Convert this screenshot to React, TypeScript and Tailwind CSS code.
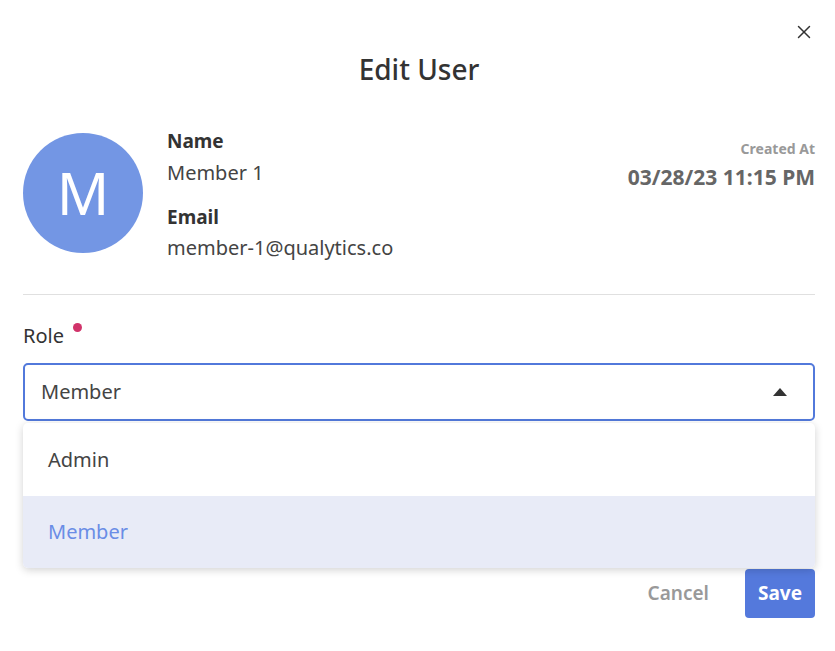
import { X } from 'lucide-react';

const FONT = { fontFamily: '"Noto Sans", "Open Sans", sans-serif' };

export default function App() {
  return (
    <div className="relative w-[835px] h-[651px] bg-white text-[#333]" style={FONT}>
      <button className="absolute right-[20px] top-[21px] text-[#333]">
        <X size={22} strokeWidth={1.6} />
      </button>

      <div className="px-[23px] pr-[20px]">
        <h1 className="pt-[49px] text-center text-[28px] leading-[40px] font-medium text-[#333]">Edit User</h1>

        {/* profile */}
        <div className="mt-[23px] flex items-start">
          <div className="mt-[21px] w-[120px] h-[120px] rounded-full bg-[#7396e4] flex items-center justify-center shrink-0">
            <span className="text-white text-[58px] leading-none font-normal">M</span>
          </div>
          <div className="ml-[24px] mt-[15px] flex-1">
            <div className="text-[19px] leading-[28px] font-bold text-[#333]">Name</div>
            <div className="mt-[4px] text-[20px] leading-[28px] text-[#444]">Member 1</div>
            <div className="mt-[16px] text-[19px] leading-[28px] font-bold text-[#333]">Email</div>
            <div className="mt-[3px] text-[20px] leading-[28px] text-[#444]">member-1@qualytics.co</div>
          </div>
          <div className="mt-[28px] text-right">
            <div className="text-[14px] leading-[18px] font-bold text-[#999]">Created At</div>
            <div className="mt-[5px] text-[21px] leading-[28px] font-bold text-[#666]">03/28/23 11:15 PM</div>
          </div>
        </div>

        <div className="mt-[32px] h-px bg-[#e0e0e0]" />

        {/* role */}
        <div className="mt-[27px] relative">
          <div className="flex items-start">
            <span className="text-[20px] leading-[28px] text-[#333]">Role</span>
            <span className="ml-[9px] mt-[1px] w-[9px] h-[9px] rounded-full bg-[#d1336a]" />
          </div>
          <div className="mt-[13px] h-[58px] rounded-[5px] border-2 border-[#5279db] flex items-center justify-between pl-[16px] pr-[26px]">
            <span className="text-[20px] text-[#444]">Member</span>
            <svg width="14" height="8" viewBox="0 0 14 8">
              <path d="M0 8 L7 0 L14 8 Z" fill="#333" />
            </svg>
          </div>

          <div className="absolute left-0 right-0 top-[100%] mt-[2px] z-10 bg-white rounded-[5px] shadow-[0_2px_8px_rgba(0,0,0,0.18)] overflow-hidden">
            <div className="h-[73px] flex items-center pl-[25px] text-[20px] text-[#444]">Admin</div>
            <div className="h-[72px] flex items-center pl-[25px] text-[20px] text-[#6a8de6] bg-[#e8ebf7]">Member</div>
          </div>
        </div>

        {/* actions */}
        <div className="mt-[148px] flex justify-end items-center gap-[36px]">
          <button className="text-[19px] font-semibold text-[#999]">Cancel</button>
          <button className="h-[49px] px-[13px] rounded-[4px] bg-[#5479dc] text-white text-[19px] font-bold">Save</button>
        </div>
      </div>
    </div>
  );
}
